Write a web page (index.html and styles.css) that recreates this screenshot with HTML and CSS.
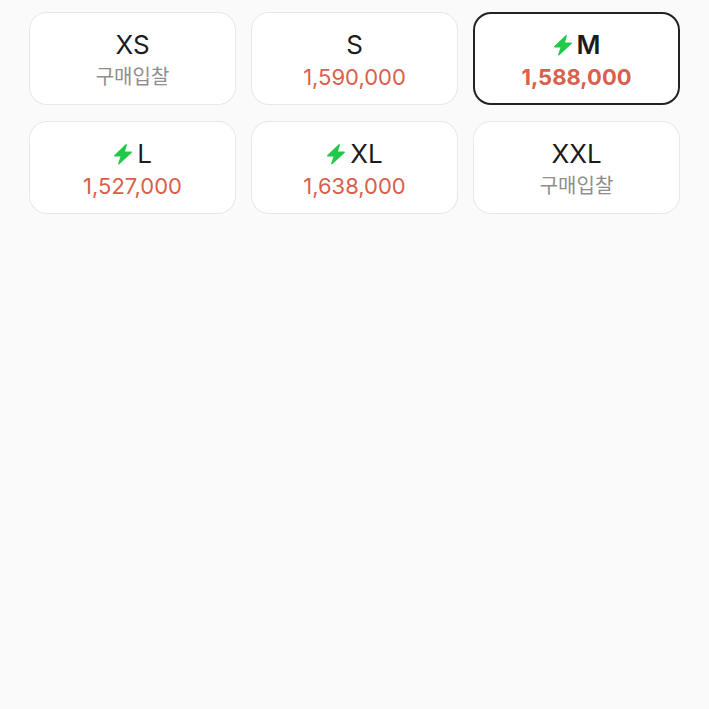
FILE: index.html
```
<!DOCTYPE html>
<html lang="ko">

<head>
  <meta charset="utf-8">
  <title>사이즈 선택</title>
  <meta name="viewport" content="width=device-width, initial-scale=1">
  <link rel="stylesheet" href="styles.css">
</head>

<body>
  <main class="size-grid">
    <button type="button" class="size">
      <span class="name">XS</span>
      <span class="bid">구매입찰</span>
    </button>
    <button type="button" class="size">
      <span class="name">S</span>
      <span class="price">1,590,000</span>
    </button>
    <button type="button" class="size selected" aria-pressed="true">
      <span class="name"><svg class="bolt" viewBox="0 0 20 22" aria-hidden="true"><path d="M13 1L1 12.500L1.500 13.500H7.500L5 21L6 21.500L19 9.500L18.500 8.500H12L14 1.500Z"/></svg>M</span>
      <span class="price">1,588,000</span>
    </button>
    <button type="button" class="size">
      <span class="name"><svg class="bolt" viewBox="0 0 20 22" aria-hidden="true"><path d="M13 1L1 12.500L1.500 13.500H7.500L5 21L6 21.500L19 9.500L18.500 8.500H12L14 1.500Z"/></svg>L</span>
      <span class="price">1,527,000</span>
    </button>
    <button type="button" class="size">
      <span class="name"><svg class="bolt" viewBox="0 0 20 22" aria-hidden="true"><path d="M13 1L1 12.500L1.500 13.500H7.500L5 21L6 21.500L19 9.500L18.500 8.500H12L14 1.500Z"/></svg>XL</span>
      <span class="price">1,638,000</span>
    </button>
    <button type="button" class="size">
      <span class="name">XXL</span>
      <span class="bid">구매입찰</span>
    </button>
  </main>
</body>

</html>
```

FILE: styles.css
```
body {
  margin: 0;
  background-color: #fafafa;
  font-family: Inter, "Noto Sans CJK KR", sans-serif;
}

.size-grid {
  display: grid;
  grid-template-columns: repeat(3, 1fr);
  gap: 16px 15px;
  padding: 12px 29px;
}

.size {
  display: flex;
  flex-direction: column;
  align-items: center;
  padding: 16px 8px 12px;
  border: 0;
  border-radius: 18px;
  background-color: white;
  box-shadow: inset 0 0 0 1px #e8e8e8;
  color: #1c1c1c;
  font-family: inherit;
  cursor: pointer;
}

.name {
  display: flex;
  align-items: center;
  font-size: 26px;
  line-height: 34px;
}

.price,
.bid {
  font-size: 22px;
  line-height: 31px;
}

.price {
  color: #d9604c;
}

.bid {
  color: #8e8e8e;
  font-size: 20px;
}

.bolt {
  width: 20px;
  height: 22px;
  margin-right: 4px;
  fill: #22c84a;
}

.selected {
  box-shadow: inset 0 0 0 2px #222;
  font-weight: 600;
}

.selected .price {
  font-weight: 700;
}
```
